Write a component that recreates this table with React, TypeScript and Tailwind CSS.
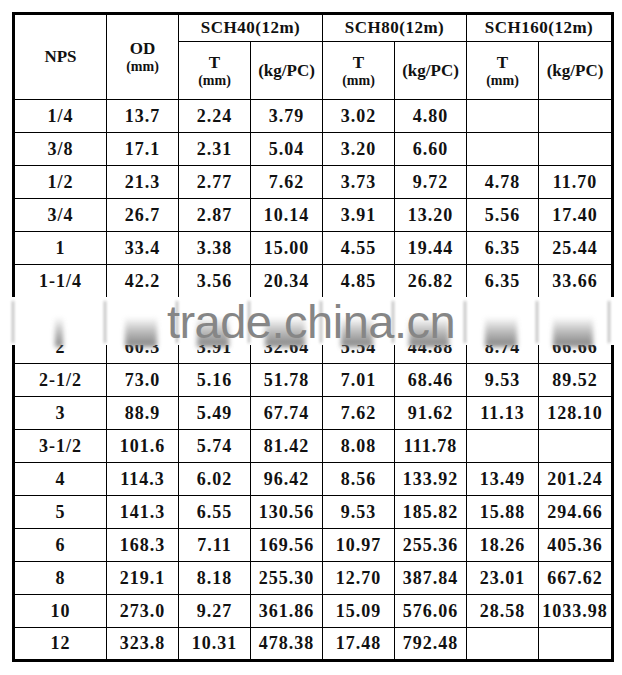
const rows: string[][] = [
  ["1/4", "13.7", "2.24", "3.79", "3.02", "4.80", "", ""],
  ["3/8", "17.1", "2.31", "5.04", "3.20", "6.60", "", ""],
  ["1/2", "21.3", "2.77", "7.62", "3.73", "9.72", "4.78", "11.70"],
  ["3/4", "26.7", "2.87", "10.14", "3.91", "13.20", "5.56", "17.40"],
  ["1", "33.4", "3.38", "15.00", "4.55", "19.44", "6.35", "25.44"],
  ["1-1/4", "42.2", "3.56", "20.34", "4.85", "26.82", "6.35", "33.66"],
  // this row sits under the watermark band and shows nothing
  ["", "", "", "", "", "", "", ""],
  ["2", "60.3", "3.91", "32.64", "5.54", "44.88", "8.74", "66.66"],
  ["2-1/2", "73.0", "5.16", "51.78", "7.01", "68.46", "9.53", "89.52"],
  ["3", "88.9", "5.49", "67.74", "7.62", "91.62", "11.13", "128.10"],
  ["3-1/2", "101.6", "5.74", "81.42", "8.08", "111.78", "", ""],
  ["4", "114.3", "6.02", "96.42", "8.56", "133.92", "13.49", "201.24"],
  ["5", "141.3", "6.55", "130.56", "9.53", "185.82", "15.88", "294.66"],
  ["6", "168.3", "7.11", "169.56", "10.97", "255.36", "18.26", "405.36"],
  ["8", "219.1", "8.18", "255.30", "12.70", "387.84", "23.01", "667.62"],
  ["10", "273.0", "9.27", "361.86", "15.09", "576.06", "28.58", "1033.98"],
  ["12", "323.8", "10.31", "478.38", "17.48", "792.48", "", ""],
];

// column line positions and centres, used by the watermark smudges
const lines = [13, 105, 177, 249, 321, 393, 465, 537, 609];
const centers = [59, 141, 213, 285, 357, 429, 501, 573];
const smearRow = rows[7];

function TMm() {
  return (
    <div className="flex flex-col items-center leading-none">
      <span>T</span>
      <span className="mt-[3px] text-[14px]">(mm)</span>
    </div>
  );
}

export default function App() {
  return (
    <div
      className="relative w-[622px] h-[675px] bg-white text-[#111] font-bold text-[18px]"
      style={{ fontFamily: '"Liberation Serif", "Times New Roman", serif' }}
    >
      <div className="pt-[12px] pl-[12px]">
        <table className="table-fixed w-[599px] border-collapse border-[3px] border-black text-center">
          <colgroup>
            <col className="w-[93px]" />
            <col className="w-[72px]" />
            <col className="w-[72px]" />
            <col className="w-[72px]" />
            <col className="w-[72px]" />
            <col className="w-[72px]" />
            <col className="w-[72px]" />
            <col className="w-[74px]" />
          </colgroup>
          <thead className="text-[17px]">
            <tr className="h-[28px]">
              <th rowSpan={2} className="border border-black font-bold">
                NPS
              </th>
              <th rowSpan={2} className="border border-black font-bold">
                <div className="flex flex-col items-center leading-none">
                  <span>OD</span>
                  <span className="mt-[3px] text-[14px]">(mm)</span>
                </div>
              </th>
              <th colSpan={2} className="border border-black font-bold tracking-[0.5px]">
                SCH40(12m)
              </th>
              <th colSpan={2} className="border border-black font-bold tracking-[0.5px]">
                SCH80(12m)
              </th>
              <th colSpan={2} className="border border-black font-bold tracking-[0.5px]">
                SCH160(12m)
              </th>
            </tr>
            <tr className="h-[58px]">
              <th className="border border-black font-bold"><TMm /></th>
              <th className="border border-black font-bold">(kg/PC)</th>
              <th className="border border-black font-bold"><TMm /></th>
              <th className="border border-black font-bold">(kg/PC)</th>
              <th className="border border-black font-bold"><TMm /></th>
              <th className="border border-black font-bold">(kg/PC)</th>
            </tr>
          </thead>
          <tbody className="tracking-[1px]">
            {rows.map((r, ri) => (
              <tr key={ri} className="h-[33px]">
                {r.map((v, i) => (
                  <td key={i} className="border border-black p-0">
                    {v}
                  </td>
                ))}
              </tr>
            ))}
          </tbody>
        </table>
      </div>

      {/* watermark band */}
      <div className="absolute left-0 top-[297px] w-[622px] h-[48px] bg-white">
        {lines.map((x) => (
          <div
            key={x}
            className="absolute top-[4px] h-[42px] w-[2px] bg-[#b0b0b0] blur-[1.5px]"
            style={{ left: x - 1 }}
          />
        ))}
        {smearRow.map((v, i) => (
          <div
            key={i}
            className="absolute top-[20px] h-[30px] -translate-x-1/2 bg-gradient-to-b from-transparent via-[#aaa] to-[#666] blur-[2.5px] opacity-80"
            style={{ left: centers[i], width: v.length * 8 }}
          />
        ))}
        <div
          className="absolute inset-x-0 top-[1px] text-center text-[47px] leading-none font-normal text-[#868686] tracking-[-0.5px]"
          style={{ fontFamily: '"Liberation Sans", Arial, sans-serif' }}
        >
          trade.china.cn
        </div>
      </div>
    </div>
  );
}
